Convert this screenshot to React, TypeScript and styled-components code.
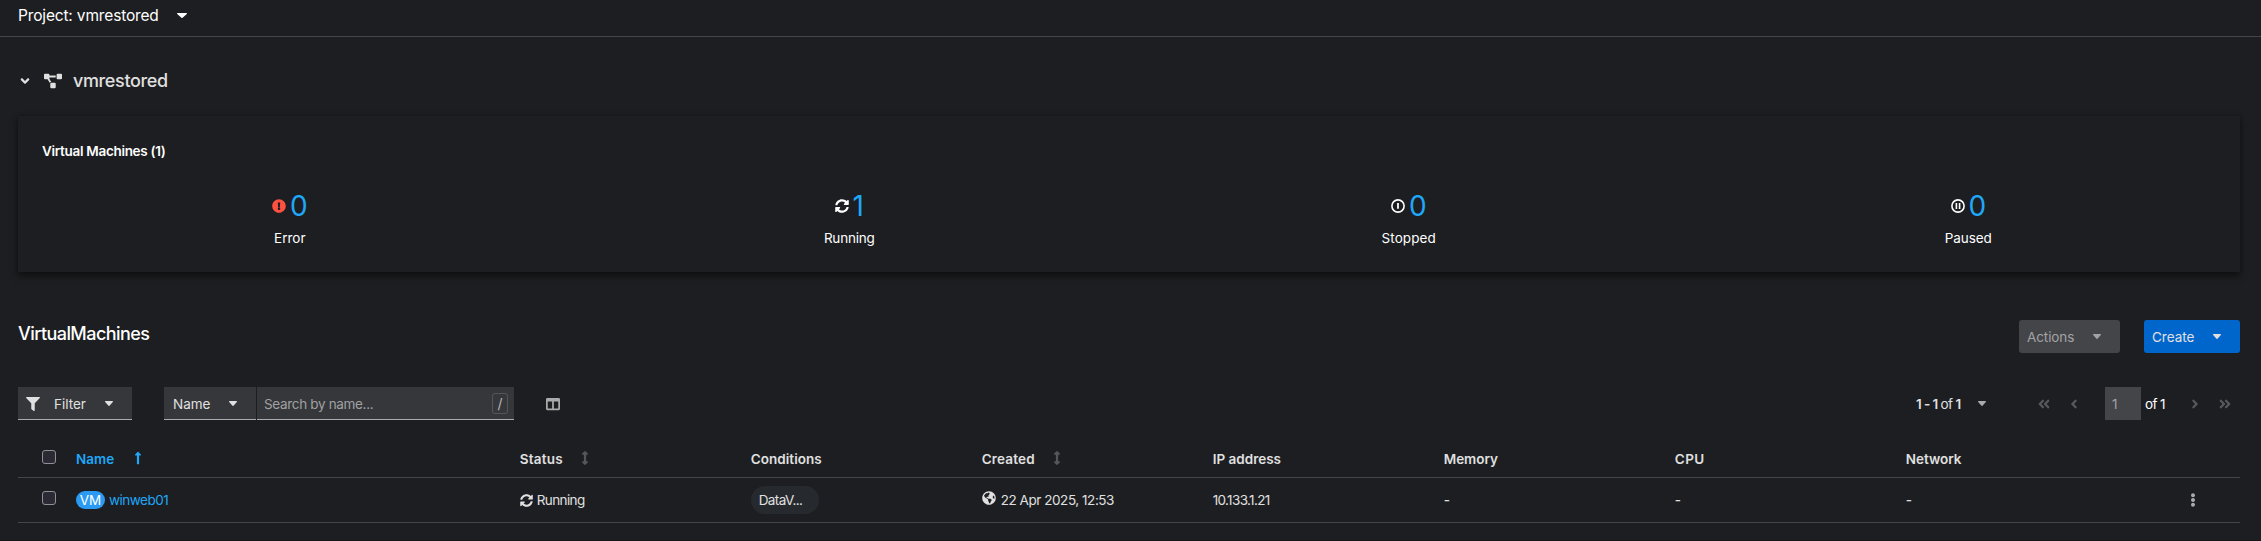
import React from "react";
import styled, { createGlobalStyle } from "styled-components";
import {
  FaAngleDoubleLeft,
  FaAngleDoubleRight,
  FaAngleDown,
  FaAngleLeft,
  FaAngleRight,
  FaArrowsAltV,
  FaColumns,
  FaEllipsisV,
  FaExclamationCircle,
  FaFilter,
  FaGlobeAmericas,
  FaLongArrowAltUp,
  FaProjectDiagram,
  FaSyncAlt,
} from "react-icons/fa";

const GlobalStyle = createGlobalStyle`
  * { box-sizing: border-box; }
  body {
    margin: 0;
    background: #1d1e21;
    color: #e0e0e0;
    font-family: Inter, "Liberation Sans", sans-serif;
    font-size: 13.5px;
    overflow: hidden;
  }
  svg { display: block; flex: none; }
`;

const Page = styled.div`
  height: 541px;
  border-bottom: 1px solid #18151a;
`;

const Label = styled.span<{ $track?: number }>`
  white-space: nowrap;
  letter-spacing: ${(p) => p.$track ?? 0}px;
`;

const ProjectBar = styled.header`
  display: flex;
  align-items: center;
  gap: 18px;
  height: 37px;
  padding: 0 18px 5px;
  border-bottom: 1px solid #444548;
  color: #fff;
  font-size: 15.5px;
`;

const Content = styled.main`
  padding: 0 21px 0 18px;
`;

const GroupHeader = styled.div`
  display: flex;
  align-items: center;
  height: 79px;
  padding: 8px 0 0;
  font-size: 18px;
  font-weight: 500;
`;

const GroupIcon = styled.span`
  display: flex;
  margin: 0 11px 0 12px;
`;

const Card = styled.section`
  height: 156px;
  padding: 20px 24px 0;
  background: #1d1e21;
  box-shadow: 0 4px 8px rgba(3, 3, 3, 0.48), 0 0 4px rgba(3, 3, 3, 0.24);
  color: #fff;
`;

const CardTitle = styled.h2`
  margin: 0 0 20px;
  font-size: 13.5px;
  font-weight: 600;
  line-height: 30px;
`;

const Stats = styled.div`
  display: grid;
  grid-template-columns: repeat(4, 1fr);
  column-gap: 64px;
`;

const Stat = styled.div`
  display: flex;
  flex-direction: column;
  align-items: center;
  gap: 2px;
  line-height: 20px;
`;

const StatCount = styled.div`
  display: flex;
  align-items: center;
  gap: 3.5px;
  height: 40px;
`;

const StatNumber = styled.a`
  color: #1fa7f8;
  font-size: 28px;
  font-weight: 400;
  letter-spacing: -0.6px;
  line-height: 40px;
`;

const TitleRow = styled.div`
  display: flex;
  justify-content: space-between;
  height: 33px;
  margin-top: 48px;
`;

const Title = styled.h1`
  margin: 0;
  color: #fff;
  font-size: 18px;
  font-weight: 500;
  line-height: 27px;
`;

const ButtonGroup = styled.div`
  display: flex;
  gap: 24px;
`;

const MenuButton = styled.button<{ $primary?: boolean }>`
  display: flex;
  align-items: center;
  gap: 19px;
  width: ${(p) => (p.$primary ? 96 : 101)}px;
  height: 33px;
  padding: 0 0 0 8px;
  border: 0;
  border-radius: 3px;
  background: ${(p) => (p.$primary ? "#0066cc" : "#444548")};
  color: ${(p) => (p.$primary ? "#e0e0e0" : "#a2a3a5")};
  font: inherit;
`;

const Toolbar = styled.div`
  display: flex;
  align-items: center;
  height: 33px;
  margin-top: 34px;
`;

const Select = styled.button<{ $width: number; $indent: number }>`
  display: flex;
  align-items: center;
  width: ${(p) => p.$width}px;
  height: 33px;
  padding: 1px 0 0 ${(p) => p.$indent}px;
  border: 0;
  border-bottom: 1px solid #aaabac;
  background: #36373a;
  color: #e0e0e0;
  font: inherit;
`;

const FilterLabel = styled.span`
  display: flex;
  margin: 0 19px 0 14px;
`;

const NameLabel = styled.span`
  display: flex;
  margin-right: 19px;
`;

const SearchGroup = styled.div`
  display: flex;
  gap: 1px;
  margin: 0 32px;
`;

const SearchBox = styled.div`
  display: flex;
  align-items: center;
  justify-content: space-between;
  width: 257px;
  height: 33px;
  padding: 1px 6px 0 7px;
  border-bottom: 1px solid #aaabac;
  background: #36373a;
  color: #a0a1a3;
`;

const Shortcut = styled.kbd`
  display: flex;
  align-items: center;
  justify-content: center;
  width: 16px;
  height: 21px;
  border: 1px solid #55565a;
  border-radius: 3px;
  color: #b8b8ba;
  font: 14px Inter, sans-serif;
`;

const Pagination = styled.nav`
  display: flex;
  align-items: center;
  margin-left: auto;
  color: #58595c;
`;

const Range = styled.span`
  display: flex;
  gap: 3px;
  width: 62px;
  color: #e0e0e0;
  b { font-weight: 600; }
`;

const PageStep = styled.span`
  display: flex;
  justify-content: center;
  width: 30px;
`;

const RangeToggle = styled.span`
  display: flex;
  margin-right: 43px;
  color: #aaabac;
`;

const PageInput = styled.span`
  width: 36px;
  height: 33px;
  margin: 0 4px 0 16px;
  padding-left: 7px;
  background: #444548;
  color: #a2a3a5;
  line-height: 34px;
`;

const PageTotal = styled.span`
  width: 35px;
  color: #fff;
`;

const Row = styled.div<{ $head?: boolean }>`
  display: grid;
  grid-template-columns: 58px 443.7px repeat(6, 231px) 280.5px 1fr;
  align-items: center;
  height: ${(p) => (p.$head ? 58 : 45)}px;
  padding-top: ${(p) => (p.$head ? 21 : 0)}px;
  border-bottom: 1px solid #444548;
  font-weight: ${(p) => (p.$head ? 600 : 400)};
`;

const Cell = styled.div<{ $gap?: number; $link?: boolean }>`
  display: flex;
  align-items: center;
  gap: ${(p) => p.$gap ?? 0}px;
  color: ${(p) => (p.$link ? "#1fa7f8" : "inherit")};
`;

const SelectCell = styled.div`
  padding: 0 0 4px 24px;
`;

const Checkbox = styled.div`
  width: 14px;
  height: 14px;
  border: 1px solid #8f8f9d;
  border-radius: 3px;
  background: #2b2a33;
`;

const SortIcon = styled.span<{ $active?: boolean }>`
  display: flex;
  padding-bottom: 2px;
  color: ${(p) => (p.$active ? "#1fa7f8" : "#55565a")};
`;

const KindBadge = styled.span`
  width: 29px;
  height: 18px;
  border-radius: 9px;
  background: #2b9af3;
  color: #fff;
  line-height: 18px;
  text-align: center;
`;

const Pill = styled.span`
  width: 68px;
  height: 28px;
  padding-left: 8px;
  border-radius: 14px;
  background: #26292d;
  line-height: 29px;
`;

const GlobeMark = styled.span`
  display: flex;
  padding-bottom: 4px;
`;

const Dash = styled.span`
  font-weight: 500;
`;

const Caret = ({ width = 8 }: { width?: number }) => (
  <svg width={width} height="5" viewBox="0 0 10 5" preserveAspectRatio="none" fill="currentColor">
    <path d="M.6 0h8.8c.5 0 .8.6.4 1L5.6 4.7a.9.9 0 0 1-1.2 0L.2 1C-.2.6.1 0 .6 0z" />
  </svg>
);

const PowerIcon = () => (
  <svg width="14" height="14" viewBox="0 0 14 14" fill="none" stroke="currentColor">
    <circle cx="7" cy="7" r="6.1" strokeWidth="1.6" />
    <path d="M7 4.1v5.6" strokeWidth="1.8" />
  </svg>
);

const PauseIcon = () => (
  <svg width="14" height="14" viewBox="0 0 14 14" fill="none" stroke="currentColor">
    <circle cx="7" cy="7" r="6.1" strokeWidth="1.6" />
    <path d="M5.4 4.1v5.8M8.6 4.1v5.8" strokeWidth="1.6" />
  </svg>
);

const stats = [
  { label: "Error", track: 0, count: 0, icon: <FaExclamationCircle size={14} color="#fe5142" /> },
  { label: "Running", track: -0.2, count: 1, icon: <FaSyncAlt size={14} /> },
  { label: "Stopped", track: 0.1, count: 0, icon: <PowerIcon /> },
  { label: "Paused", track: -0.1, count: 0, icon: <PauseIcon /> },
];

export default function App() {
  return (
    <Page>
      <GlobalStyle />
      <ProjectBar>
        <Label $track={-0.16}>Project: vmrestored</Label>
        <Caret width={10} />
      </ProjectBar>
      <Content>
        <GroupHeader>
          <FaAngleDown size={14} />
          <GroupIcon>
            <FaProjectDiagram size={18} />
          </GroupIcon>
          <Label $track={-0.36}>vmrestored</Label>
        </GroupHeader>

        <Card>
          <CardTitle>
            <Label $track={-0.3}>Virtual Machines (1)</Label>
          </CardTitle>
          <Stats>
            {stats.map((s) => (
              <Stat key={s.label}>
                <StatCount>
                  {s.icon}
                  <StatNumber>{s.count}</StatNumber>
                </StatCount>
                <Label $track={s.track}>{s.label}</Label>
              </Stat>
            ))}
          </Stats>
        </Card>

        <TitleRow>
          <Title>
            <Label $track={-0.56}>VirtualMachines</Label>
          </Title>
          <ButtonGroup>
            <MenuButton>
              <Label $track={-0.1}>Actions</Label>
              <Caret />
            </MenuButton>
            <MenuButton $primary>
              <Label>Create</Label>
              <Caret />
            </MenuButton>
          </ButtonGroup>
        </TitleRow>

        <Toolbar>
          <Select $width={114} $indent={8}>
            <FaFilter size={14} />
            <FilterLabel>
              <Label>Filter</Label>
            </FilterLabel>
            <Caret />
          </Select>
          <SearchGroup>
            <Select $width={92} $indent={9}>
              <NameLabel>
                <Label>Name</Label>
              </NameLabel>
              <Caret />
            </Select>
            <SearchBox>
              <Label $track={-0.33}>Search by name...</Label>
              <Shortcut>/</Shortcut>
            </SearchBox>
          </SearchGroup>
          <FaColumns size={14} color="#aaabac" />

          <Pagination>
            <Range>
              <b>
                <Label $track={-0.6}>1 - 1</Label>
              </b>
              <Label $track={-0.6}>of</Label>
              <b>1</b>
            </Range>
            <RangeToggle>
              <Caret />
            </RangeToggle>
            <PageStep>
              <FaAngleDoubleLeft size={14} />
            </PageStep>
            <PageStep>
              <FaAngleLeft size={14} />
            </PageStep>
            <PageInput>1</PageInput>
            <PageTotal>
              <Label $track={-0.6}>of 1</Label>
            </PageTotal>
            <PageStep>
              <FaAngleRight size={14} />
            </PageStep>
            <PageStep>
              <FaAngleDoubleRight size={14} />
            </PageStep>
          </Pagination>
        </Toolbar>

        <Row $head>
          <SelectCell>
            <Checkbox />
          </SelectCell>
          <Cell $gap={17} $link>
            <Label>Name</Label>
            <SortIcon $active>
              <FaLongArrowAltUp size={14} />
            </SortIcon>
          </Cell>
          <Cell $gap={15}>
            <Label $track={0.25}>Status</Label>
            <SortIcon>
              <FaArrowsAltV size={14} />
            </SortIcon>
          </Cell>
          <Cell>
            <Label $track={0.05}>Conditions</Label>
          </Cell>
          <Cell $gap={15}>
            <Label $track={0.17}>Created</Label>
            <SortIcon>
              <FaArrowsAltV size={14} />
            </SortIcon>
          </Cell>
          <Cell>
            <Label>IP address</Label>
          </Cell>
          <Cell>
            <Label>Memory</Label>
          </Cell>
          <Cell>
            <Label $track={0.5}>CPU</Label>
          </Cell>
          <Cell>
            <Label>Network</Label>
          </Cell>
        </Row>
        <Row>
          <SelectCell>
            <Checkbox />
          </SelectCell>
          <Cell $gap={4} $link>
            <KindBadge>VM</KindBadge>
            <Label $track={-0.5}>winweb01</Label>
          </Cell>
          <Cell $gap={4}>
            <FaSyncAlt size={13} />
            <Label $track={-0.6}>Running</Label>
          </Cell>
          <Cell>
            <Pill>
              <Label $track={-0.6}>DataV...</Label>
            </Pill>
          </Cell>
          <Cell $gap={5}>
            <GlobeMark>
              <FaGlobeAmericas size={14} />
            </GlobeMark>
            <Label $track={-0.45}>22 Apr 2025, 12:53</Label>
          </Cell>
          <Cell>
            <Label $track={-0.65}>10.133.1.21</Label>
          </Cell>
          <Cell>
            <Dash>-</Dash>
          </Cell>
          <Cell>
            <Dash>-</Dash>
          </Cell>
          <Cell>
            <Dash>-</Dash>
          </Cell>
          <Cell>
            <FaEllipsisV size={14} color="#aaabac" />
          </Cell>
        </Row>
      </Content>
    </Page>
  );
}
